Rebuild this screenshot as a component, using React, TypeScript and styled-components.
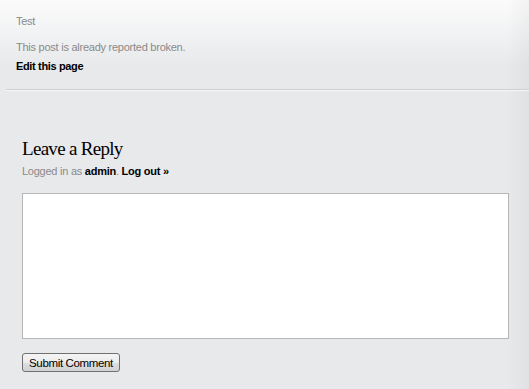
import React from "react";
import styled, { createGlobalStyle } from "styled-components";

const Global = createGlobalStyle`
  html, body { margin: 0; padding: 0; }
  body { background: #e8e9eb; font-family: "Liberation Sans", Arial, sans-serif; }
`;

const Page = styled.div`
  position: relative;
  min-height: 389px;
  background:
    linear-gradient(to right, rgba(0,0,0,0) calc(100% - 22px), rgba(0,0,0,0.035)),
    linear-gradient(to bottom, #fbfbfb 0px, #f1f2f3 35px, #e8e9eb 65px, #e8e9eb 100%);
  overflow: hidden;
`;

const Post = styled.div`
  padding: 15px 16px 0 16px;
  height: 74px;
`;

const Meta = styled.p`
  margin: 0;
  font-size: 11px;
  line-height: 13px;
  letter-spacing: -0.25px;
  color: #8a8a8a;
`;

const Note = styled(Meta)`
  margin-top: 13px;
`;

const EditLink = styled.a`
  display: block;
  margin-top: 6px;
  font-size: 11px;
  line-height: 13px;
  letter-spacing: -0.35px;
  font-weight: bold;
  color: #000;
  text-decoration: none;
`;

const Divider = styled.hr`
  margin: 0 0 0 6px;
  border: 0;
  border-top: 1px solid #cfcfd0;
  border-bottom: 1px solid #f6f6f7;
  height: 0;
`;

const Respond = styled.div`
  padding: 47px 20px 0 22px;
`;

const Title = styled.h3`
  margin: 0;
  font-family: "Liberation Serif", "Times New Roman", serif;
  font-weight: normal;
  font-size: 19px;
  line-height: 22px;
  letter-spacing: -0.7px;
  color: #000;
`;

const LoggedIn = styled.p`
  margin: 5px 0 0 0;
  font-size: 11px;
  line-height: 13px;
  letter-spacing: -0.25px;
  color: #8a8a8a;
`;

const Strong = styled.a`
  color: #000;
  font-weight: bold;
  text-decoration: none;
`;

const TextArea = styled.textarea`
  display: block;
  box-sizing: border-box;
  margin: 15px 0 0 0;
  width: 487px;
  height: 146px;
  border: 1px solid #b6b6b6;
  background: #fff;
  resize: none;
  padding: 2px;
  outline: none;
`;

const Submit = styled.button`
  display: block;
  margin-top: 14px;
  box-sizing: border-box;
  width: 98px;
  height: 19px;
  padding: 0;
  border: 1px solid #707070;
  border-radius: 3px;
  background: linear-gradient(to bottom, #f4f4f4 0%, #ececec 50%, #dedede 51%, #d2d2d2 100%);
  font-family: "Liberation Sans", Arial, sans-serif;
  font-size: 11.5px;
  line-height: 16px;
  letter-spacing: -0.35px;
  color: #000;
`;

export default function App() {
  return (
    <Page>
      <Global />
      <Post>
        <Meta>Test</Meta>
        <Note>This post is already reported broken.</Note>
        <EditLink href="#">Edit this page</EditLink>
      </Post>
      <Divider />
      <Respond>
        <Title>Leave a Reply</Title>
        <LoggedIn>
          Logged in as <Strong href="#">admin</Strong>. <Strong href="#">Log out »</Strong>
        </LoggedIn>
        <TextArea />
        <Submit type="button">Submit Comment</Submit>
      </Respond>
    </Page>
  );
}
